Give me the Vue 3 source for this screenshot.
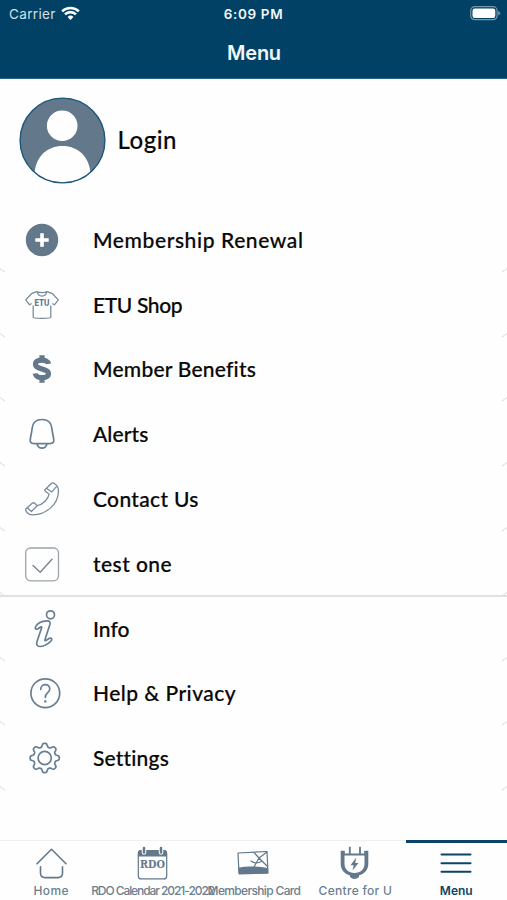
<script setup>
const items = [
  { icon: 'plus', label: 'Membership Renewal', spacing: 0.6 },
  { icon: 'shirt', label: 'ETU Shop', spacing: -0.35 },
  { icon: 'dollar', label: 'Member Benefits', spacing: 0.22 },
  { icon: 'bell', label: 'Alerts', spacing: 0.1 },
  { icon: 'phone', label: 'Contact Us', spacing: 0.33 },
  { icon: 'check', label: 'test one', spacing: 0.45, divided: true },
  { icon: 'info', label: 'Info', spacing: 0 },
  { icon: 'help', label: 'Help & Privacy', spacing: 0.45 },
  { icon: 'gear', label: 'Settings', spacing: 0.17 },
]

const tabs = [
  { icon: 'home', label: 'Home', spacing: 0.35 },
  { icon: 'calendar', label: 'RDO Calendar 2021-2022', spacing: -1.07 },
  { icon: 'card', label: 'Membership Card', spacing: -0.65 },
  { icon: 'plug', label: 'Centre for U', spacing: 0.3 },
  { icon: 'menu', label: 'Menu', spacing: 0, active: true },
]

// Outline of an eight-toothed cog centred on the origin
const gearPath = Array.from({ length: 97 }, (_, i) => {
  const a = (i / 96) * Math.PI * 2
  const wave = Math.cos(8 * a)
  const r = 12.9 + 1.7 * Math.tanh(2 * wave) / Math.tanh(2)
  return `${i ? 'L' : 'M'}${(r * Math.sin(a)).toFixed(2)} ${(-r * Math.cos(a)).toFixed(2)}`
}).join('') + 'Z'
</script>

<template>
  <div class="screen">
    <header class="top">
      <div class="status">
        <div class="carrier">
          <span>Carrier</span>
          <svg class="wifi" viewBox="0 0 20 15">
            <path d="M1.2 5.3a12.7 12.7 0 0 1 17.6 0" />
            <path d="M4.2 8.4a8.4 8.4 0 0 1 11.6 0" />
            <path class="solid" d="M6.9 11.1a4.5 4.5 0 0 1 6.2 0L10 14.3z" />
          </svg>
        </div>
        <div class="time">6:09 PM</div>
        <svg class="battery" viewBox="0 0 31 15">
          <rect class="shell" x=".7" y=".7" width="26.4" height="13" rx="4" />
          <rect class="charge" x="2.5" y="2.5" width="22.8" height="9.4" rx="2.2" />
          <path class="cap" d="M28.2 5v4.6q2-.8 2-2.3t-2-2.3z" />
        </svg>
      </div>
      <h1>Menu</h1>
    </header>

    <section class="login">
      <svg class="avatar" viewBox="0 0 87 87">
        <clipPath id="avatar-clip"><circle cx="43.5" cy="43.5" r="42.4" /></clipPath>
        <circle class="disc" cx="43.5" cy="43.5" r="42.4" />
        <g class="person" clip-path="url(#avatar-clip)">
          <circle cx="43.2" cy="28.8" r="15.3" />
          <path d="M15.5 87V76C17 59.500 28 49 43.500 49S70 59.500 71.500 76V87z" />
        </g>
        <circle class="ring" cx="43.5" cy="43.5" r="42.4" />
      </svg>
      <span>Login</span>
    </section>

    <nav class="list">
      <div v-for="item in items" :key="item.label" class="row" :class="{ divided: item.divided }">
        <svg class="icon" viewBox="-22 -22 44 44">
          <template v-if="item.icon === 'plus'">
            <circle class="fill" r="16.2" />
            <path class="cross" d="M-6.7 0H6.7M0-6.7V6.7" />
          </template>
          <template v-else-if="item.icon === 'shirt'">
            <path class="thin" d="M-5.2-13.3L-10.5-11.3-16.3-5.1-12.4-.2-8.8-2.3V12.2Q-8.8 13.3 0 13.3T8.8 12.2V-2.3L12.4-.2 16.3-5.1 10.5-11.3 5.2-13.3Q0-11.5-5.2-13.3zM-4.7-13Q-4-9 0-9T4.7-13" />
            <path class="side-gap" d="M-8.8-5V.4M8.8-5V.4" />
            <text class="etu" x="0" y=".8" textLength="15" lengthAdjust="spacingAndGlyphs">ETU</text>
          </template>
          <template v-else-if="item.icon === 'dollar'">
            <path class="dollar" d="M6.5-5.2C5.8-10-6.5-10.5-6.5-4.7-6.5.8 6.5-.8 6.5 4.7 6.5 10-6 10-6.8 4.5M0-13.8V-8M0 8V13.8" />
          </template>
          <template v-else-if="item.icon === 'bell'">
            <path class="medium" d="M0-14.5C-6.2-14.5-9.4-10.8-9.9-5.5-10.2-1-11.8 3-11.8 6.5-11.8 9-9.5 9.7-7 9.7H7C9.5 9.7 11.8 9 11.8 6.5 11.8 3 10.2-1 9.9-5.5 9.4-10.8 6.2-14.5 0-14.5zM-5 9.7C-3.5 15.7 3.5 15.7 5 9.7" />
          </template>
          <template v-else-if="item.icon === 'phone'">
            <path class="thin" d="M2.9-9.2L9.6-15.8Q11-16.8 12.7-15.2 16.6-12.7 16.5-7.5C16.2 5 4.5 15.8-9.5 15.9-14 15.7-16.9 12.4-16.2 10L-9.8 4.2Q-8.7 3.2-7 4.5L-4.8 6.6C1 5.5 6.5-.2 7.1-4.8L3.2-7.9Q2.3-8.5 2.9-9.2zM4.5-10.7L9.6-6.9 14.2-12.1M-14.8 8.7L-10.6 12.5-5.3 7.2" />
          </template>
          <template v-else-if="item.icon === 'check'">
            <rect class="box" x="-16.3" y="-16" width="32.8" height="32.8" rx="4.8" />
            <path class="tick" d="M-9 1.5L-1.8 8.3 10-4.8" />
          </template>
          <template v-else-if="item.icon === 'info'">
            <circle class="medium" cx="8.5" cy="-14.2" r="4" />
            <path class="medium" d="M-6.5-2.2C-4-7 1-8 5-8.1 8-8.2 8.5-6.5 7.9-4.5L3 10.5C2.2 13 5 11 7 9.5 9.5 8 10.8 10.5 8.7 12.3 5 15.5 1 17.5-2 17.5-5 17.5-5.8 15.5-5 12.5L-.4-1C.2-3.2-1.5-2-3.6-.5-5.5.9-7.6-.2-6.5-2.2z" />
          </template>
          <template v-else-if="item.icon === 'help'">
            <circle class="medium" cx="3.3" cy=".2" r="14.4" />
            <path class="medium" d="M-1.2-3.7C-1.2-10 7.8-10 7.8-3.9 7.8-.5 3.3.1 3.3 4.3" />
            <circle class="fill" cx="3.3" cy="8.4" r="1.2" />
          </template>
          <g v-else transform="translate(2.7 0)">
            <path class="medium" :d="gearPath" />
            <circle class="medium" r="6.6" />
          </g>
        </svg>
        <span class="label" :style="{ letterSpacing: item.spacing + 'px' }">{{ item.label }}</span>
      </div>
    </nav>

    <footer class="tabs">
      <div v-for="tab in tabs" :key="tab.label" class="tab" :class="{ active: tab.active }">
        <svg class="tab-icon" viewBox="-18 -18 36 36">
          <path v-if="tab.icon === 'home'" class="line" d="M-14 .8L.5-13.7 15 .8M-10.5 3.8V10Q-10.5 14.6-6 14.6H7Q11.5 14.6 11.5 10V3.8" />
          <g v-else-if="tab.icon === 'calendar'" transform="translate(.5 0)">
            <path class="fill" d="M-14.5-6.5V-10Q-14.5-13-11.5-13H11.5Q14.5-13 14.5-10V-6.5z" />
            <rect class="outline" x="-14.2" y="-12.5" width="28.4" height="28.4" rx="3" />
            <path class="ring-gap" d="M-8.5-15V-10.5M8.5-15V-10.5" />
            <path class="ring-pin" d="M-8.5-15V-10.5M8.5-15V-10.5" />
            <text class="rdo" x="0" y="5.2" textLength="25" lengthAdjust="spacingAndGlyphs">RDO</text>
          </g>
          <template v-else-if="tab.icon === 'card'">
            <path class="outline" d="M-15-10L14-11.5 15 10-14 10.5z" />
            <path class="fill" d="M-15 4.7Q-7 3 .5 3.5T15 5V10.5L-14 11.5z" />
            <path class="outline" d="M1-10.5L6-5 14-11M14 3L6-5 1 4M-2-2Q3 2 9-2" />
          </template>
          <template v-else-if="tab.icon === 'plug'">
            <path class="prong" d="M-5.2-16.3V-9M5-16.3V-9" />
            <path class="fill" d="M-14.3-12.2H-10.2V-9.5H9.2V-12.2H13.3V1C13.3 7 9 11 4 12.5V14Q-.5 18-5 14V12.5C-10 11-14.3 7-14.3 1z" />
            <path class="inside" d="M-10.5-7.4H9.5V1C9.5 6 5.5 10-.5 10S-10.5 6-10.5 1z" />
            <path class="fill" d="M1.3-5.5L-4.5 2.2H-1.3L-2.5 7.5 3.5 0H.2z" />
          </template>
          <path v-else class="bars" d="M-14.5-8.5H14.5M-14.5.2H14.5M-14.5 8.8H14.5" />
        </svg>
        <span class="tab-label" :style="{ letterSpacing: tab.spacing + 'px' }">{{ tab.label }}</span>
      </div>
    </footer>
  </div>
</template>

<style>
body { margin: 0; background: #fefefe; }
</style>

<style scoped>
.screen {
  display: flex;
  flex-direction: column;
  width: 507px;
  height: 900px;
  overflow: hidden;
  background: #fefefe;
  color: #080808;
  font-family: Lato, sans-serif;
}
.top {
  flex: none;
  box-sizing: border-box;
  height: 79px;
  background: #004165;
  border-bottom: 1px solid #2d6685;
  color: #f2f8fb;
  font-family: Inter, sans-serif;
}
.status {
  display: grid;
  grid-template-columns: 1fr auto 1fr;
  align-items: center;
  height: 27px;
  padding: 0 6px 0 9px;
}
.carrier {
  display: flex;
  align-items: center;
  gap: 5.5px;
  color: #d3e0e8;
  font-size: 13.5px;
  letter-spacing: .35px;
}
.wifi { width: 19px; height: 15px; fill: none; stroke: #fff; stroke-width: 2.7; }
.wifi .solid { fill: #fff; stroke: none; }
.time { margin-left: -3px; font-size: 13.5px; font-weight: 600; letter-spacing: .65px; }
.battery { justify-self: end; width: 31px; height: 15px; }
.shell { fill: none; stroke: #7896aa; stroke-width: 1.2; }
.charge { fill: #fff; }
.cap { fill: #7896aa; }
h1 {
  margin: 0;
  padding-left: 1px;
  text-align: center;
  font-size: 20px;
  font-weight: 600;
  letter-spacing: -.25px;
  line-height: 52px;
}
.login {
  flex: none;
  display: flex;
  align-items: center;
  gap: 12px;
  height: 129px;
  box-sizing: border-box;
  padding: 0 0 7px 18.5px;
  font-size: 24px;
  font-weight: 500;
  letter-spacing: .5px;
}
.login span { margin-top: -1px; -webkit-text-stroke: .15px #080808; }
.avatar { width: 87px; height: 87px; }
.disc { fill: #63788a; }
.person { fill: #fefefe; }
.ring { fill: none; stroke: #1d5779; stroke-width: 1.4; }
.list { flex: 1; }
.row {
  box-sizing: border-box;
  display: flex;
  align-items: center;
  gap: 29px;
  height: 64.8px;
  padding: 1px 0 0 20px;
  border-bottom: 2px solid transparent;
  background:
    linear-gradient(35deg, transparent 40%, #e6e6e6 46% 58%, transparent 64%) left bottom / 5px 5px no-repeat border-box,
    linear-gradient(-35deg, transparent 40%, #e6e6e6 46% 58%, transparent 64%) right bottom / 5px 5px no-repeat border-box;
}
.row.divided { border-bottom-color: #e0e2e2; }
.icon { flex: none; width: 44px; height: 44px; fill: none; stroke-linecap: round; stroke-linejoin: round; }
.label {
  font-size: 21px;
  font-weight: 500;
  line-height: 28px;
  white-space: nowrap;
  -webkit-text-stroke: .2px #080808;
}
.fill { fill: #63788a; stroke: none; }
.cross { stroke: #fff; stroke-width: 3.6; stroke-linecap: butt; }
.thin { stroke: #77899a; stroke-width: 1.25; }
.medium { stroke: #687f93; stroke-width: 1.7; }
.box { stroke: #9ba4a9; stroke-width: 1.3; }
.tick { stroke: #7b858b; stroke-width: 1.4; }
.dollar { stroke: #63788a; stroke-width: 5.2; stroke-linecap: butt; }
.side-gap { stroke: #fefefe; stroke-width: 3; stroke-linecap: butt; }
.etu { fill: #63788a; font: 800 8.5px Inter, sans-serif; text-anchor: middle; }
.tabs {
  flex: none;
  display: grid;
  grid-template-columns: repeat(5, 1fr);
  height: 60px;
}
.tab {
  box-sizing: border-box;
  display: flex;
  flex-direction: column;
  align-items: center;
  min-width: 0;
  padding-top: 4px;
  border-top: 1px solid #f0f0f0;
  color: #6b7f90;
  font-family: Inter, sans-serif;
}
.tab.active { padding-top: 2px; border-top: 3px solid #0a4567; color: #0a4567; }
.tab-icon { flex: none; width: 36px; height: 36px; fill: none; stroke-linecap: round; stroke-linejoin: round; }
.tab-label { margin-top: 2px; padding-left: 1px; font-size: 12px; font-weight: 500; line-height: 16px; white-space: nowrap; }
.active .tab-label { padding-left: 0; font-weight: 600; }
.line { stroke: #63788a; stroke-width: 1.6; }
.outline { stroke: #63788a; stroke-width: 1.2; }
.ring-gap { stroke: #fefefe; stroke-width: 4.5; }
.ring-pin { stroke: #63788a; stroke-width: 2.5; }
.rdo { fill: #63788a; font: bold 10.5px "DejaVu Serif", serif; text-anchor: middle; }
.prong { stroke: #63788a; stroke-width: 1.8; stroke-linecap: butt; }
.inside { fill: #fefefe; }
.bars { stroke: #0a4567; stroke-width: 2; }
</style>
